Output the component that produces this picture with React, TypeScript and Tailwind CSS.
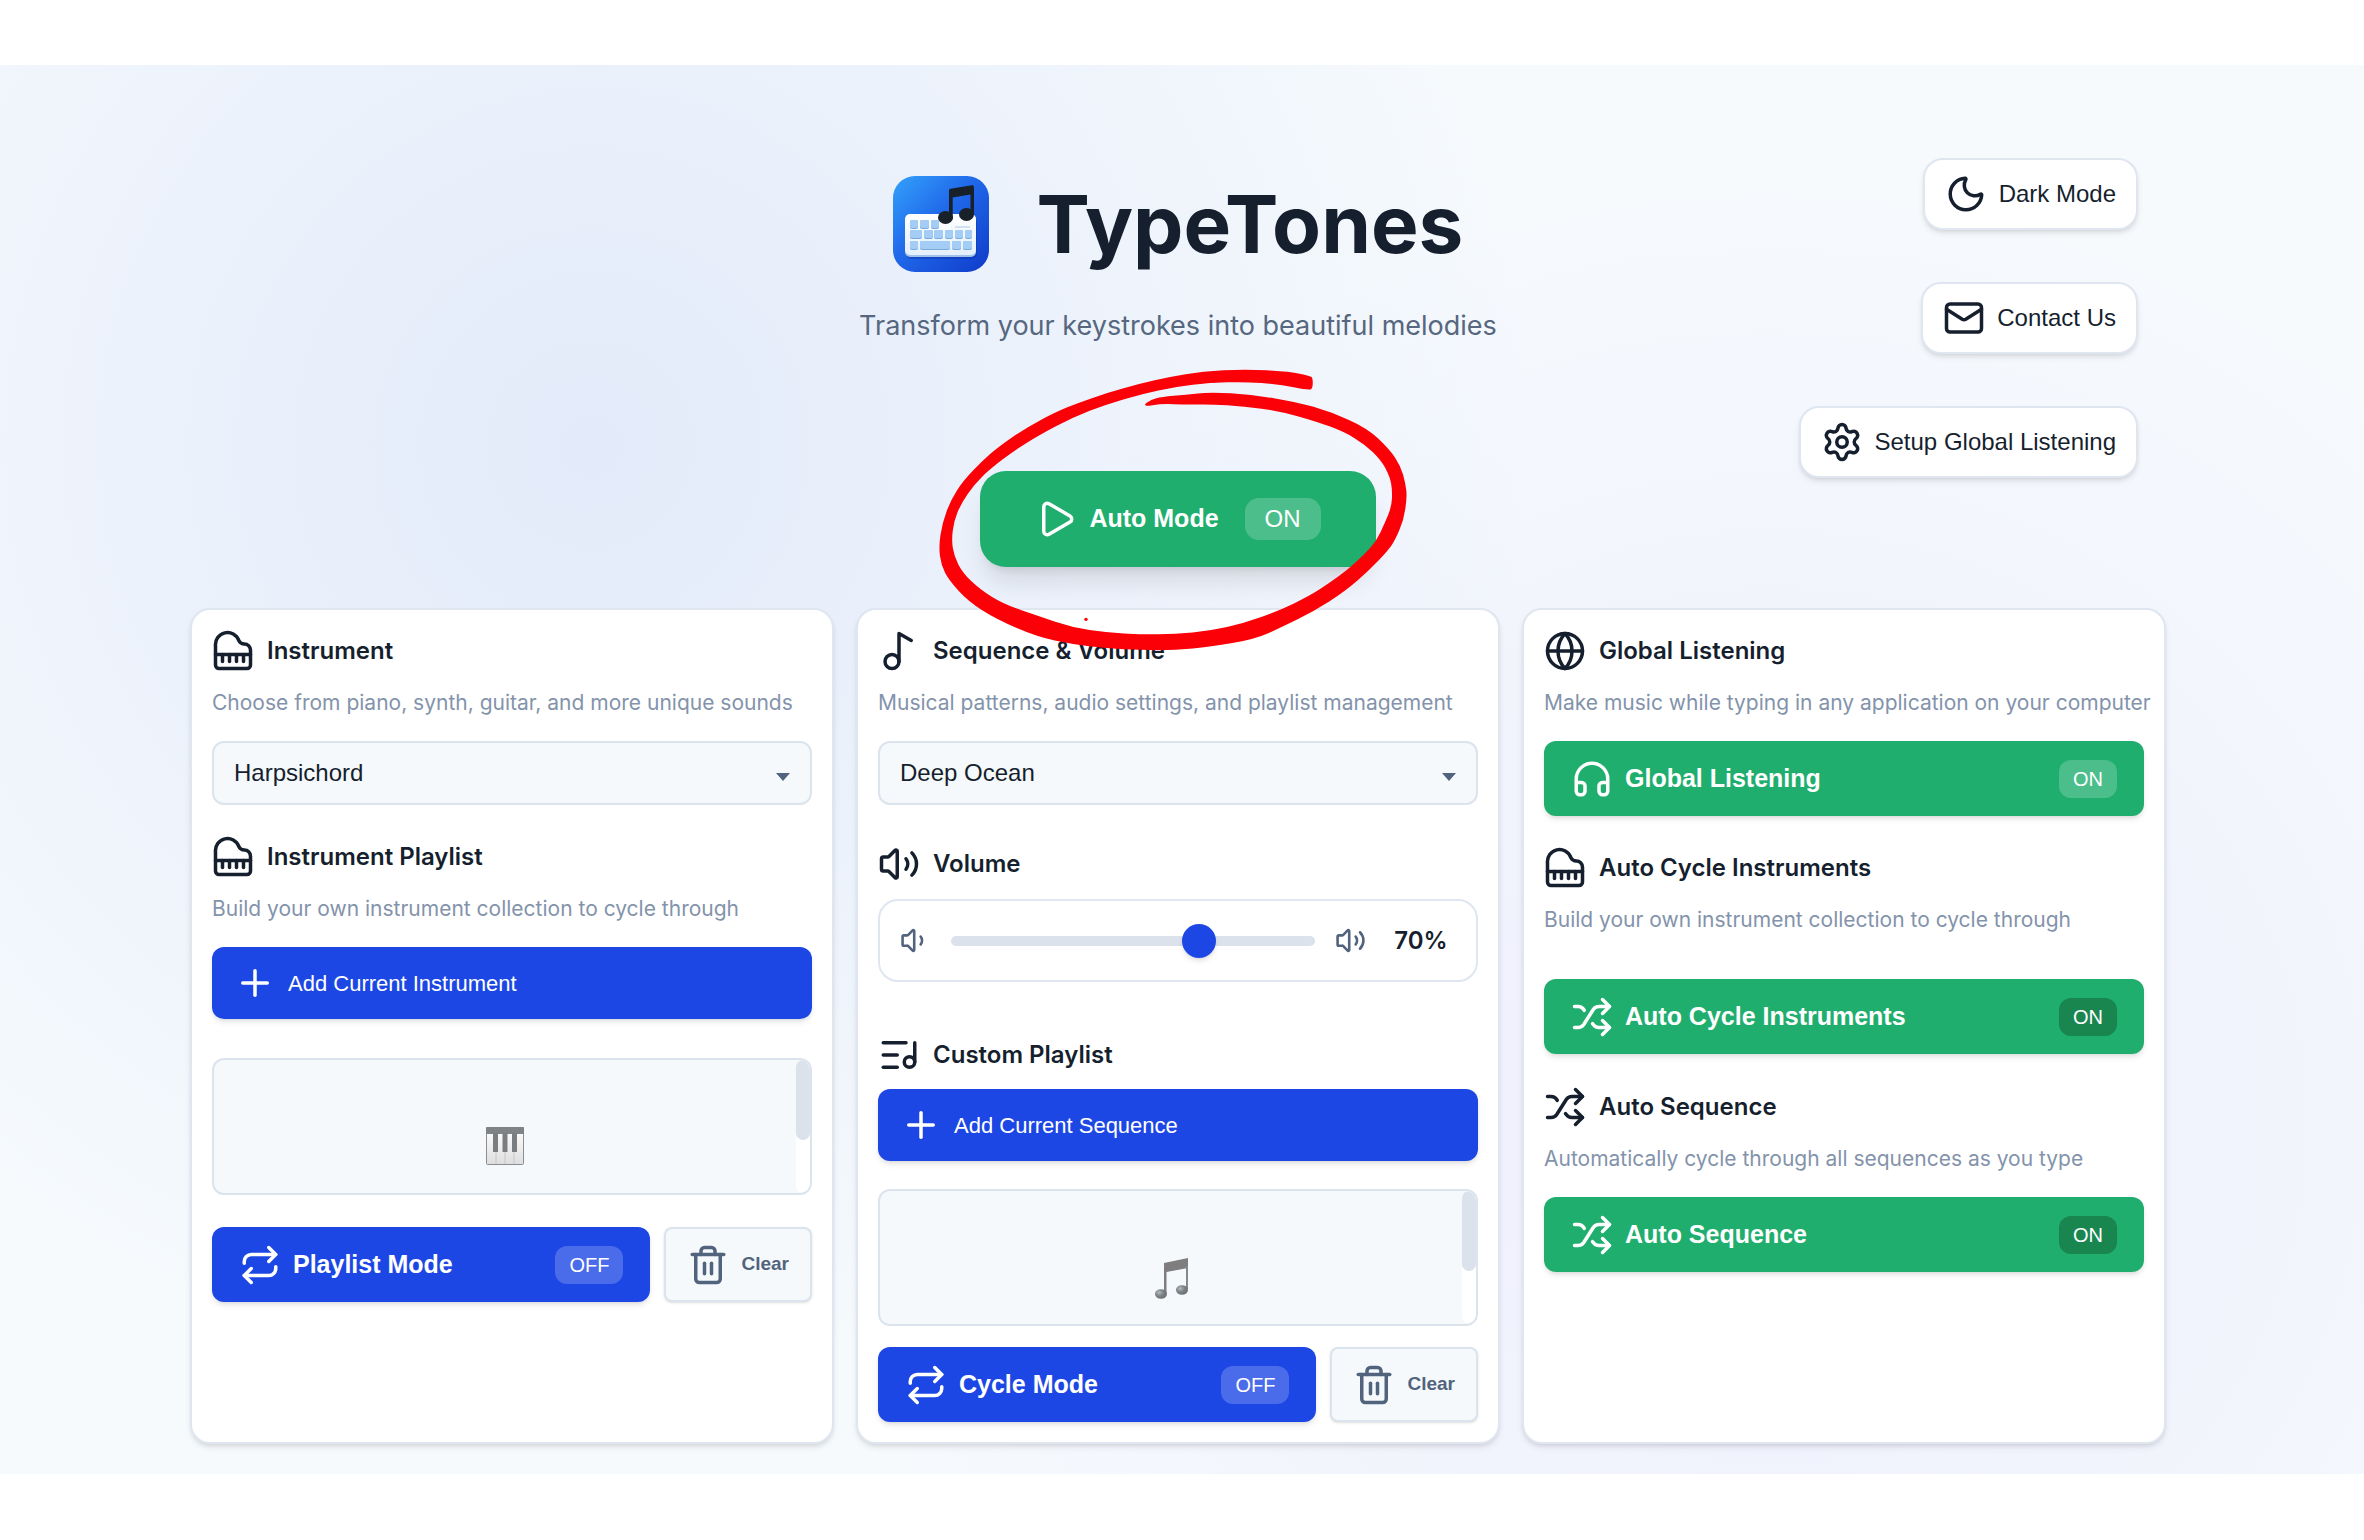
import type { ComponentType, ReactNode } from "react";
import { useState } from "react";
import {
  Globe,
  Headphones,
  ListMusic,
  Mail,
  Moon,
  Music2,
  Piano,
  Play,
  Plus,
  Repeat,
  Settings,
  Shuffle,
  Trash2,
  Volume1,
  Volume2,
} from "lucide-react";

type IconType = ComponentType<{ size?: number; className?: string }>;

const ui = "font-['Liberation_Sans',Arial,sans-serif]";

// x, y and width of each key on the logo's keyboard
const logoKeys = [
  [17, 44, 8], [27, 44, 9], [38, 44, 8],
  [17, 54, 12], [31, 54, 9], [41, 54, 9], [52, 54, 8], [62, 54, 8], [72, 54, 7],
  [17, 65, 8], [27, 65, 30], [59, 65, 9], [70, 65, 9],
];

function Logo() {
  return (
    <svg width="96" height="96" viewBox="0 0 96 96" aria-hidden="true">
      <defs>
        <linearGradient id="logo-bg" x1="0" y1="0" x2="1" y2="1">
          <stop offset="0" stopColor="#33a1fb" />
          <stop offset="0.45" stopColor="#2068ea" />
          <stop offset="1" stopColor="#0f3bc9" />
        </linearGradient>
        <linearGradient id="logo-board" x1="0" y1="0" x2="0" y2="1">
          <stop offset="0" stopColor="#ffffff" />
          <stop offset="1" stopColor="#e3effb" />
        </linearGradient>
      </defs>
      <rect width="96" height="96" rx="22" fill="url(#logo-bg)" />
      <rect x="13" y="42" width="71" height="41" rx="5" fill="#0b2f9f" opacity="0.4" />
      <rect x="12" y="40" width="71" height="41" rx="5" fill="#9fc1ea" />
      <rect x="12" y="38" width="71" height="41" rx="5" fill="url(#logo-board)" />
      {logoKeys.map(([x, y, w]) => (
        <g key={`${x}-${y}`}>
          <rect x={x} y={y} width={w} height="9" rx="2" fill="#7ba9dc" />
          <rect x={x} y={y} width={w} height="8" rx="2" fill="#a3cdf5" />
        </g>
      ))}
      <path d="M62 51h15" stroke="#c4d9ef" strokeWidth="1.500" />
      <path
        d="M56 14.500Q56 13 57.500 12.700L79 9.200Q81 9 81 11V39H77.500V18.500L59.700 21.500V43H56Z"
        fill="#18202a"
      />
      <ellipse cx="52.500" cy="41.500" rx="7.500" ry="6.500" fill="#18202a" />
      <ellipse cx="73.500" cy="38.500" rx="7.500" ry="6.500" fill="#18202a" />
    </svg>
  );
}

function KeysPicture() {
  return (
    <svg width="38" height="38" viewBox="0 0 38 38" aria-hidden="true">
      <defs>
        <linearGradient id="ivory" x1="0" y1="0" x2="0" y2="1">
          <stop offset="0" stopColor="#ffffff" />
          <stop offset="1" stopColor="#dedede" />
        </linearGradient>
      </defs>
      <rect x="0.500" y="0.500" width="37" height="37" rx="1" fill="url(#ivory)" stroke="#8b8f91" />
      <rect width="38" height="7" rx="1" fill="#808385" />
      <path d="M10 7v30M19 7v30M28 7v30" stroke="#c4c6c7" />
      <path d="M7 6h5v19h-5zM16.500 6h5v19h-5zM26 6h5v19h-5z" fill="#7b7e80" />
    </svg>
  );
}

function NotesPicture() {
  return (
    <svg width="33" height="41" viewBox="0 0 33 41" aria-hidden="true">
      <defs>
        <radialGradient id="note-head" cx="0.35" cy="0.35" r="0.7">
          <stop offset="0" stopColor="#b4bcc1" />
          <stop offset="0.5" stopColor="#7c8286" />
          <stop offset="1" stopColor="#6b6f72" />
        </radialGradient>
      </defs>
      <path d="M9 5L33 0V10L11.500 14V35H9Z" fill="#807d7e" />
      <path d="M31 8H33V31H31Z" fill="#85898b" />
      <ellipse cx="6" cy="36" rx="6" ry="4.800" fill="url(#note-head)" />
      <ellipse cx="27" cy="32" rx="6" ry="4.800" fill="url(#note-head)" />
    </svg>
  );
}

// Outline of the brush stroke, out along the outer edge and back along the inner one
const brush = [
  [1190, 80], [1130, 67], [1000, 60], [880, 67], [780, 84], [700, 103], [600, 132], [520, 160],
  [450, 190], [365, 237], [290, 290], [240, 335], [185, 395], [150, 450], [125, 520], [115, 590],
  [122, 645], [145, 690], [200, 752], [280, 805], [400, 858], [500, 880], [600, 893], [700, 898],
  [800, 898], [900, 888], [1030, 865], [1110, 828], [1200, 782], [1290, 723], [1360, 660],
  [1415, 600], [1435, 570], [1460, 510], [1470, 440], [1465, 400], [1452, 350], [1420, 300],
  [1355, 236], [1250, 188], [1150, 158], [1020, 136], [900, 129], [830, 137], [760, 143],
  [730, 152], [706, 168], [760, 158], [830, 162], [900, 160], [1000, 167], [1100, 180],
  [1210, 212], [1290, 243], [1350, 280], [1400, 330], [1425, 380], [1432, 420], [1430, 470],
  [1410, 520], [1385, 575], [1350, 615], [1300, 662], [1250, 700], [1190, 740], [1100, 785],
  [1000, 822], [900, 845], [800, 855], [700, 856], [600, 850], [500, 835], [400, 800], [300, 765],
  [230, 720], [180, 670], [155, 620], [147, 570], [155, 510], [175, 460], [215, 400], [260, 355],
  [330, 300], [400, 255], [500, 200], [600, 160], [700, 130], [800, 108], [900, 96], [1000, 93],
  [1100, 100], [1188, 119], [1196, 112], [1196, 86],
];

function smooth(points: number[][]) {
  const mid = (a: number[], b: number[]) => `${(a[0] + b[0]) / 2} ${(a[1] + b[1]) / 2}`;
  const last = points[points.length - 1];
  return (
    `M${mid(last, points[0])}` +
    points.map((p, i) => `Q${p[0]} ${p[1]} ${mid(p, points[(i + 1) % points.length])}`).join("") +
    "Z"
  );
}

function RedCircle() {
  return (
    <svg
      className="pointer-events-none absolute -left-20 -top-[121px] z-10 h-80 w-[540px] max-w-none"
      viewBox="0 0 1568 960"
      preserveAspectRatio="none"
      aria-hidden="true"
    >
      <path
        d={smooth(brush)}
        fill="#fb0007"
        stroke="#fb0007"
        strokeWidth="5"
        strokeLinejoin="round"
      />
      <ellipse cx="540" cy="808" rx="5" ry="5" fill="#fb0007" />
    </svg>
  );
}

function NavButton({ icon: Icon, children }: { icon: IconType; children: ReactNode }) {
  return (
    <button
      type="button"
      className={`flex h-[72px] items-center gap-3 rounded-[20px] border-2 border-[#dfe6f0] bg-white px-5 text-2xl shadow-md ${ui}`}
    >
      <Icon size={42} />
      {children}
    </button>
  );
}

function Heading({ icon: Icon, children }: { icon: IconType; children: ReactNode }) {
  return (
    <h2 className="flex items-center gap-[13px] text-2xl font-semibold">
      <Icon size={42} />
      {children}
    </h2>
  );
}

function Description({ children }: { children: ReactNode }) {
  return <p className="mt-[15px] text-[21px] leading-8 whitespace-nowrap text-[#8393ab]">{children}</p>;
}

function Select({ label, options }: { label: string; options: string[] }) {
  return (
    <div className="relative mt-[22px]">
      <select
        aria-label={label}
        className={`h-16 w-full appearance-none rounded-xl border-2 border-[#dbe3ed] bg-[#f5f9fc] px-5 text-2xl ${ui}`}
      >
        {options.map((o) => (
          <option key={o}>{o}</option>
        ))}
      </select>
      <svg
        className="pointer-events-none absolute right-[22px] top-8"
        width="14"
        height="8"
        viewBox="0 0 14 8"
        aria-hidden="true"
      >
        <path d="M0 0h14L7 8z" fill="#52637d" />
      </svg>
    </div>
  );
}

function AddButton({ children }: { children: ReactNode }) {
  return (
    <button
      type="button"
      className={`flex h-[72px] w-full items-center gap-3 rounded-xl bg-[#1d47e5] px-[22px] text-[22px] text-white shadow-md ${ui}`}
    >
      <Plus size={42} />
      {children}
    </button>
  );
}

function ScrollList({ children }: { children: ReactNode }) {
  return (
    <div className="flex h-[137px] overflow-hidden rounded-xl border-2 border-[#dbe3ed] bg-[#f5f9fc]">
      <div className="flex flex-1 justify-center pt-[67px]">{children}</div>
      <div className="w-[14px] rounded-full bg-white">
        <div className="h-20 rounded-full bg-[#dbe2ec]" />
      </div>
    </div>
  );
}

type ToggleProps = { icon: IconType; label: string; initial?: boolean; dark?: boolean };

function Toggle({ icon: Icon, label, initial = true, dark = false }: ToggleProps) {
  const [on, setOn] = useState(initial);
  return (
    <button
      type="button"
      aria-pressed={on}
      onClick={() => setOn(!on)}
      className={`flex h-[75px] w-full items-center gap-3 rounded-xl px-[27px] text-[25px] font-bold text-white shadow-md ${ui} ${
        on ? "bg-[#1fae6e]" : "bg-[#1d47e5]"
      }`}
    >
      <Icon size={42} />
      {label}
      <span
        className={`ml-auto rounded-xl px-[14px] text-xl leading-[38px] font-normal ${
          dark ? "bg-[#19854f]" : "bg-white/20"
        }`}
      >
        {on ? "ON" : "OFF"}
      </span>
    </button>
  );
}

function ModeRow({ label }: { label: string }) {
  return (
    <div className="flex gap-[14px]">
      <div className="flex-1">
        <Toggle icon={Repeat} label={label} initial={false} />
      </div>
      <button
        type="button"
        className={`flex h-[75px] items-center gap-3 rounded-lg border-2 border-[#dbe3ed] bg-[#f5f9fc] px-[21px] text-[19px] font-bold text-[#52637d] shadow-sm ${ui}`}
      >
        <Trash2 size={42} />
        Clear
      </button>
    </div>
  );
}

function Card({ children }: { children: ReactNode }) {
  return (
    <section className="rounded-[20px] border-2 border-[#dfe6f0] bg-white p-5 shadow-md">
      {children}
    </section>
  );
}

function VolumeControl() {
  const [volume, setVolume] = useState(70);
  return (
    <div className="mt-[14px] flex h-[83px] items-center gap-5 rounded-[20px] border-2 border-[#dfe6f0] px-5">
      <Volume1 size={31} className="text-[#52637d]" />
      <input
        type="range"
        aria-label="Volume"
        min={0}
        max={100}
        value={volume}
        onChange={(e) => setVolume(Number(e.target.value))}
        className="h-[10px] min-w-0 flex-1 appearance-none rounded-full bg-[#dbe2ec] [&::-webkit-slider-thumb]:h-[34px] [&::-webkit-slider-thumb]:w-[34px] [&::-webkit-slider-thumb]:appearance-none [&::-webkit-slider-thumb]:rounded-full [&::-webkit-slider-thumb]:bg-[#1d47e5] [&::-webkit-slider-thumb]:shadow-md"
      />
      <Volume2 size={31} className="text-[#52637d]" />
      <span className="w-[70px] text-center text-2xl font-semibold">{volume}%</span>
    </div>
  );
}

export default function App() {
  const [auto, setAuto] = useState(true);

  return (
    <div className="min-h-screen bg-white py-[65px] font-['Inter',sans-serif] text-[#161f2e]">
      <main className="bg-[#f6fafd] bg-[radial-gradient(circle_at_25%_27%,rgba(29,78,216,0.09),transparent_950px),radial-gradient(circle_at_75%_75%,rgba(139,92,246,0.08),transparent_950px)] pt-[93px] pr-[198px] pb-[30px] pl-[190px]">
        <header className="grid grid-cols-[1fr_auto_1fr]">
          <div className="col-start-2 flex flex-col items-center pt-[18px]">
            <div className="flex items-center gap-12">
              <Logo />
              <h1 className="text-[80px] leading-[96px] font-bold">TypeTones</h1>
            </div>
            <p className="mt-8 text-[27px] leading-[44px] text-[#56677f]">
              Transform your keystrokes into beautiful melodies
            </p>
            <div className="relative mt-[123px]">
              <button
                type="button"
                aria-pressed={auto}
                onClick={() => setAuto(!auto)}
                className={`flex h-24 items-center gap-3 rounded-[26px] bg-[#1fae6e] px-[55px] text-[25px] font-bold text-white shadow-xl ${ui}`}
              >
                <Play size={42} />
                Auto Mode
                <span className="ml-[14px] rounded-[14px] bg-white/20 px-5 text-2xl leading-[42px] font-normal">
                  {auto ? "ON" : "OFF"}
                </span>
              </button>
              <RedCircle />
            </div>
          </div>
          <nav className="flex flex-col items-end gap-[52px] pr-7">
            <NavButton icon={Moon}>Dark Mode</NavButton>
            <NavButton icon={Mail}>Contact Us</NavButton>
            <NavButton icon={Settings}>Setup Global Listening</NavButton>
          </nav>
        </header>

        <div className="mt-[41px] grid grid-cols-3 gap-[22px]">
          <Card>
            <Heading icon={Piano}>Instrument</Heading>
            <Description>Choose from piano, synth, guitar, and more unique sounds</Description>
            <Select label="Instrument" options={["Harpsichord", "Piano", "Synth", "Guitar"]} />
            <div className="mt-[31px]">
              <Heading icon={Piano}>Instrument Playlist</Heading>
            </div>
            <Description>Build your own instrument collection to cycle through</Description>
            <div className="mt-[22px]">
              <AddButton>Add Current Instrument</AddButton>
            </div>
            <div className="mt-[39px] mb-8">
              <ScrollList>
                <KeysPicture />
              </ScrollList>
            </div>
            <ModeRow label="Playlist Mode" />
          </Card>

          <Card>
            <Heading icon={Music2}>Sequence &amp; Volume</Heading>
            <Description>Musical patterns, audio settings, and playlist management</Description>
            <Select label="Sequence" options={["Deep Ocean"]} />
            <div className="mt-[38px]">
              <Heading icon={Volume2}>Volume</Heading>
            </div>
            <VolumeControl />
            <div className="mt-[52px] mb-[13px]">
              <Heading icon={ListMusic}>Custom Playlist</Heading>
            </div>
            <AddButton>Add Current Sequence</AddButton>
            <div className="mt-7 mb-[21px]">
              <ScrollList>
                <NotesPicture />
              </ScrollList>
            </div>
            <ModeRow label="Cycle Mode" />
          </Card>

          <Card>
            <Heading icon={Globe}>Global Listening</Heading>
            <Description>Make music while typing in any application on your computer</Description>
            <div className="mt-[22px] mb-[31px]">
              <Toggle icon={Headphones} label="Global Listening" />
            </div>
            <Heading icon={Piano}>Auto Cycle Instruments</Heading>
            <Description>Build your own instrument collection to cycle through</Description>
            <div className="mt-[43px] mb-8">
              <Toggle icon={Shuffle} label="Auto Cycle Instruments" dark />
            </div>
            <Heading icon={Shuffle}>Auto Sequence</Heading>
            <Description>Automatically cycle through all sequences as you type</Description>
            <div className="mt-[22px]">
              <Toggle icon={Shuffle} label="Auto Sequence" dark />
            </div>
          </Card>
        </div>
      </main>
    </div>
  );
}
